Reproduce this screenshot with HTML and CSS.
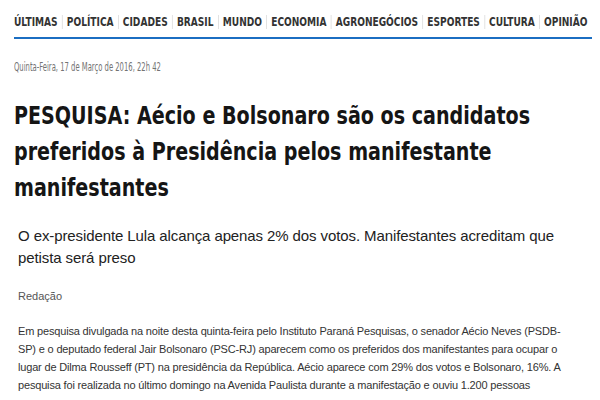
FILE: index.html
```html
<!DOCTYPE html>
<html lang="pt-br">
<head>
<meta charset="UTF-8">
<title>PESQUISA: Aécio e Bolsonaro são os candidatos preferidos</title>
<link rel="stylesheet" href="styles.css">
</head>
<body>
<div class="menu">
    <div class="menu-itens">
        <a href="#">ÚLTIMAS</a>
        <a href="#">POLÍTICA</a>
        <a href="#">CIDADES</a>
        <a href="#">BRASIL</a>
        <a href="#">MUNDO</a>
        <a href="#">ECONOMIA</a>
        <a href="#">AGRONEGÓCIOS</a>
        <a href="#">ESPORTES</a>
        <a href="#">CULTURA</a>
        <a href="#">OPINIÃO</a>
    </div>
</div>
<div class="data"><span>Quinta-Feira, 17 de Março de 2016, 22h 42</span></div>
<h1 class="titulo"><span>PESQUISA: Aécio e Bolsonaro são os candidatos<br>preferidos à Presidência pelos manifestante<br>manifestantes</span></h1>
<div class="materia">
    <h2 class="linha-fina">O ex-presidente Lula alcança apenas 2% dos votos. Manifestantes acreditam que petista será preso</h2>
    <div class="autor">Redação</div>
    <p>Em pesquisa divulgada na noite desta quinta-feira pelo Instituto Paraná Pesquisas, o senador Aécio Neves (PSDB-SP) e o deputado federal Jair Bolsonaro (PSC-RJ) aparecem como os preferidos dos manifestantes para ocupar o lugar de Dilma Rousseff (PT) na presidência da República. Aécio aparece com 29% dos votos e Bolsonaro, 16%. A pesquisa foi realizada no último domingo na Avenida Paulista durante a manifestação e ouviu 1.200 pessoas</p>
</div>
</body>
</html>
```
FILE: styles.css
```css
body {
    margin: 0;
    padding: 0 8px 0 14px;
    background: #fff;
    font-family: "Liberation Sans", Arial, sans-serif;
    color: #222;
    overflow: hidden;
}
/* fontes condensadas: sem Oswald/Titillium, usamos DejaVu Condensed comprimida */
.menu {
    padding: 15px 0 8px 0;
    border-bottom: 2px solid #1b6ec2;
    width: 578px;
}
.menu-itens {
    display: flex;
    align-items: center;
    width: max-content;
    transform: scaleX(0.84);
    transform-origin: left center;
}
.menu-itens a {
    font-family: "DejaVu Sans Condensed", sans-serif;
    font-weight: bold;
    font-size: 12px;
    line-height: 14px;
    color: #333;
    text-decoration: none;
    padding: 0 5px;
    border-left: 1px solid #ddd;
}
.menu-itens a:first-child { border-left: none; padding-left: 0; }
.data {
    font-family: "DejaVu Sans Condensed", sans-serif;
    font-size: 11.5px;
    line-height: 14px;
    color: #737373;
    margin: 21px 0 0 0;
}
.data span {
    display: inline-block;
    white-space: nowrap;
    transform: scaleX(0.66);
    transform-origin: left center;
}
.titulo {
    font-family: "DejaVu Sans Condensed", sans-serif;
    font-weight: bold;
    font-size: 25px;
    line-height: 36px;
    color: #151515;
    margin: 24px 0 0 0;
}
.titulo span {
    display: inline-block;
    white-space: nowrap;
    transform: scaleX(0.85);
    transform-origin: left center;
}
.materia {
    padding: 0 0 0 4px;
    width: 545px;
}
.linha-fina {
    font-size: 15px;
    font-weight: normal;
    line-height: 22px;
    letter-spacing: -0.1px;
    color: #222;
    margin: 19px 0 0 0;
}
.autor {
    font-size: 11px;
    line-height: 14px;
    color: #555;
    margin: 20px 0 0 0;
}
.materia p {
    font-size: 11px;
    line-height: 18px;
    letter-spacing: -0.17px;
    color: #333;
    margin: 19px 0 0 0;
}
```
